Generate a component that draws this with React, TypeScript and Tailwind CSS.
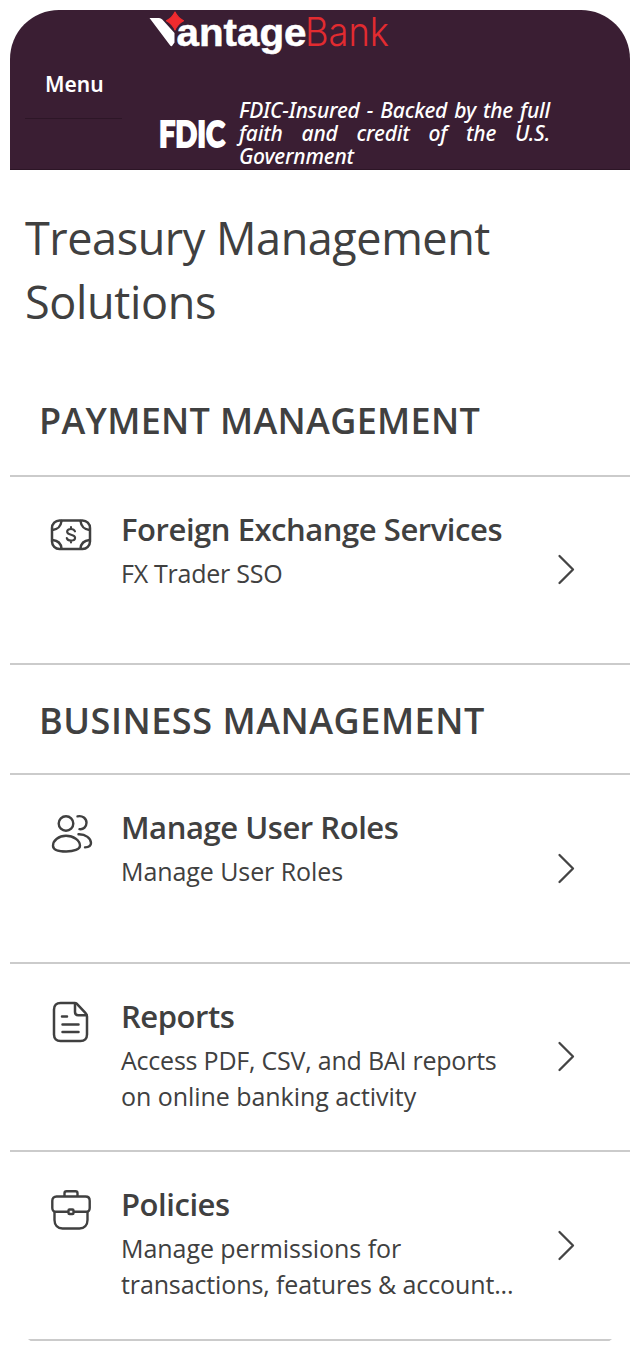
import type { ReactNode } from 'react'

type Item = {
  icon: ReactNode
  title: string
  lines: string[]
  // letter spacing of each line
  lineClasses: string[]
  height: string
}

function MoneyIcon() {
  return (
    <svg width="44" height="44" viewBox="0 0 44 44" fill="none" stroke="currentColor" strokeWidth="2.5" strokeLinecap="round" strokeLinejoin="round">
      <path d="M10 7.500h24l7 7v14.500l-7 7H10l-7-7V14.500z" stroke="none" />
      <rect x="3" y="7.500" width="38" height="28.500" rx="7.500" />
      <path d="M12.500 8c-.5 5-4 8.500-9 9M31.500 8c.5 5 4 8.500 9 9M12.500 35.500c-.5-5-4-8-9-8.500M31.500 35.500c.5-5 4-8 9-8.500" />
      <path d="M26 18.300c-.7-1.600-2.200-2.300-4-2.300-2.200 0-3.900 1-3.900 2.800 0 4 8 2 8 6 0 1.800-1.800 2.800-4.100 2.800-2 0-3.700-.8-4.200-2.500M22 14v2M22 27.600v1.800" strokeWidth="2.1" />
    </svg>
  )
}

function UsersIcon() {
  return (
    <svg width="44" height="44" viewBox="0 0 44 44" fill="none" stroke="currentColor" strokeWidth="2.4" strokeLinecap="round">
      <circle cx="17" cy="12.500" r="7.300" />
      <path d="M17 24.800c-7.200 0-13 4.700-13 9.900 0 3.700 5.500 5.800 13.200 5.800S31 38.400 31 34.700c0-5.200-6.500-9.900-14-9.900z" />
      <path d="M28.500 5.400c5-1.300 9 2.300 9 6.400 0 4.100-3.300 7-7 6.300" />
      <path d="M29.500 23.200c7.300-.2 12.500 4.300 12.500 8.800 0 2.700-2.500 4.200-6 4.400" />
    </svg>
  )
}

function ReportIcon() {
  return (
    <svg width="44" height="44" viewBox="0 0 44 44" fill="none" stroke="currentColor" strokeWidth="2.500" strokeLinecap="round" strokeLinejoin="round">
      <path d="M26 3H11.500C7.500 3 5 5.500 5 9.500v25c0 4 2.500 6.500 6.500 6.500h20c4 0 6.500-2.500 6.500-6.500V16.500c0-1.500-.4-2.300-1.400-3.300l-8-8.600C27.800 3.500 27.200 3 26 3z" />
      <path d="M26 3.500V12c0 2 1.200 3.200 3.200 3.200H37.500M13 16.500h5M13.500 24.500h16M13.500 32h16" />
    </svg>
  )
}

function BriefcaseIcon() {
  return (
    <svg width="44" height="44" viewBox="0 0 44 44" fill="none" stroke="currentColor" strokeWidth="2.400" strokeLinejoin="round">
      <path d="M15.500 8V5.200c0-1.200.8-2 2-2h9c1.200 0 2 .8 2 2V8" />
      <path d="M7.500 8.500h29c2.500 0 4.200 1.700 4.200 4.200V20c0 2.500-1.500 3.800-3.800 3.800H7.100c-2.300 0-3.800-1.300-3.800-3.800v-7.300c0-2.500 1.700-4.200 4.200-4.200z" />
      <path d="M5.500 23.500V32c0 5 3.200 8.500 8 8.500h17c4.800 0 8-3.500 8-8.500v-8.500" />
      <rect x="19.500" y="21.500" width="5" height="4.500" rx="1" fill="white" />
    </svg>
  )
}

function Chevron() {
  return (
    <svg width="20" height="32" viewBox="0 0 20 32" fill="none" stroke="#444" strokeWidth="2.300" strokeLinecap="round" strokeLinejoin="round">
      <path d="M3.500 2L17 15.500L3.500 29" />
    </svg>
  )
}

function Logo() {
  return (
    <svg width="244" height="46" viewBox="0 0 244 46" className="block overflow-visible">
      <path d="M.5 8h9.500q2 0 3.300 1.500l12.200 13.500v9.500l-2.500 3.500q-1 .5-2-.8z" fill="white" />
      <path d="M26 2Q28.300 7.500 34.500 10.700Q28.300 14 26 20Q23.700 14 17.500 10.700Q23.700 7.500 26 2z" fill="#ef2b2f" stroke="#ef2b2f" strokeWidth="1.200" strokeLinejoin="round" />
      <text x="27.500" y="35.500" textLength="130" lengthAdjust="spacingAndGlyphs" fill="white" stroke="white" strokeWidth="0.500" className="font-['Liberation_Sans',sans-serif] text-[38px] font-bold">antage</text>
      <text x="156" y="35.500" textLength="84" lengthAdjust="spacingAndGlyphs" fill="#e22b30" className="font-[Inter,sans-serif] text-[39px] leading-none font-light">Bank</text>
    </svg>
  )
}

const payment: Item[] = [
  {
    icon: <MoneyIcon />,
    title: 'Foreign Exchange Services',
    lines: ['FX Trader SSO'],
    lineClasses: ['tracking-[-0.25px]'],
    height: 'h-[188px]',
  },
]

const business: Item[] = [
  {
    icon: <UsersIcon />,
    title: 'Manage User Roles',
    lines: ['Manage User Roles'],
    lineClasses: ['tracking-[-0.08px]'],
    height: 'h-[189px]',
  },
  {
    icon: <ReportIcon />,
    title: 'Reports',
    lines: ['Access PDF, CSV, and BAI reports', 'on online banking activity'],
    lineClasses: ['tracking-[-0.22px]', 'tracking-[-0.05px]'],
    height: 'h-[188px]',
  },
  {
    icon: <BriefcaseIcon />,
    title: 'Policies',
    lines: ['Manage permissions for', 'transactions, features & account...'],
    lineClasses: ['tracking-[-0.05px]', 'tracking-[-0.12px]'],
    height: 'h-[189px]',
  },
]

function Row({ item }: { item: Item }) {
  return (
    <a className={`flex items-center border-b-2 border-[#cbcbcb] pr-[54px] pl-[39px] ${item.height}`}>
      <div className="mt-[36px] self-start">{item.icon}</div>
      <div className="mt-[30px] ml-[28px] flex-1 self-start whitespace-nowrap">
        <h3 className="text-[31px] leading-[44px] font-semibold tracking-[-0.45px]">{item.title}</h3>
        <div className="mt-[4px] text-[25px] leading-[36px]">
          {item.lines.map((line, i) => (
            <p key={line}>
              <span className={item.lineClasses[i]}>{line}</span>
            </p>
          ))}
        </div>
      </div>
      <Chevron />
    </a>
  )
}

export default function App() {
  return (
    <div className="h-[1360px] w-[640px] bg-white p-[10px]">
      <main className="h-[1340px] overflow-hidden rounded-[49px] bg-white font-['Open_Sans',sans-serif] text-[#404040]">
        <header className="flex h-[160px] border-b border-[#2c1526] bg-[#3a1e33] text-white">
          <div className="ml-[15px] h-[109px] w-[97px] border-b border-[#2d1627] pt-[59px] pl-[20px]">
            <span className="font-['Noto_Sans',sans-serif] text-[21px] leading-[30px] font-semibold">Menu</span>
          </div>
          <div className="ml-[27px]">
            <Logo />
            <div className="mt-[43px] ml-[10px] flex">
              <svg width="68" height="58" viewBox="0 0 68 58" className="overflow-visible">
                <text x="0" y="47.500" textLength="66" lengthAdjust="spacingAndGlyphs" fill="white" stroke="white" strokeWidth="2" className="font-[Lato,sans-serif] text-[36px] font-black">FDIC</text>
              </svg>
              <p className="ml-[12px] w-[311px] text-justify font-['Noto_Sans',sans-serif] text-[21px] leading-[23px] font-medium tracking-[-0.2px] italic">
                FDIC-Insured - Backed by the full faith and credit of the U.S. Government
              </p>
            </div>
          </div>
        </header>

        <h1 className="mt-[36px] ml-[15px] text-[45px] leading-[64px] tracking-[-0.45px]">
          Treasury Management
          <br />
          <span className="tracking-[-0.35px]">Solutions</span>
        </h1>

        <section>
          <h2 className="mt-[63px] h-[80px] border-b-2 border-[#cbcbcb] pl-[29px] text-[36px] leading-[48px] font-semibold tracking-[0.32px]">
            PAYMENT MANAGEMENT
          </h2>
          {payment.map((item) => <Row key={item.title} item={item} />)}
        </section>

        <section>
          <h2 className="h-[110px] border-b-2 border-[#cbcbcb] pt-[32px] pl-[29px] text-[36px] leading-[48px] font-semibold tracking-[0.55px]">
            BUSINESS MANAGEMENT
          </h2>
          {business.map((item) => <Row key={item.title} item={item} />)}
        </section>
      </main>
    </div>
  )
}
